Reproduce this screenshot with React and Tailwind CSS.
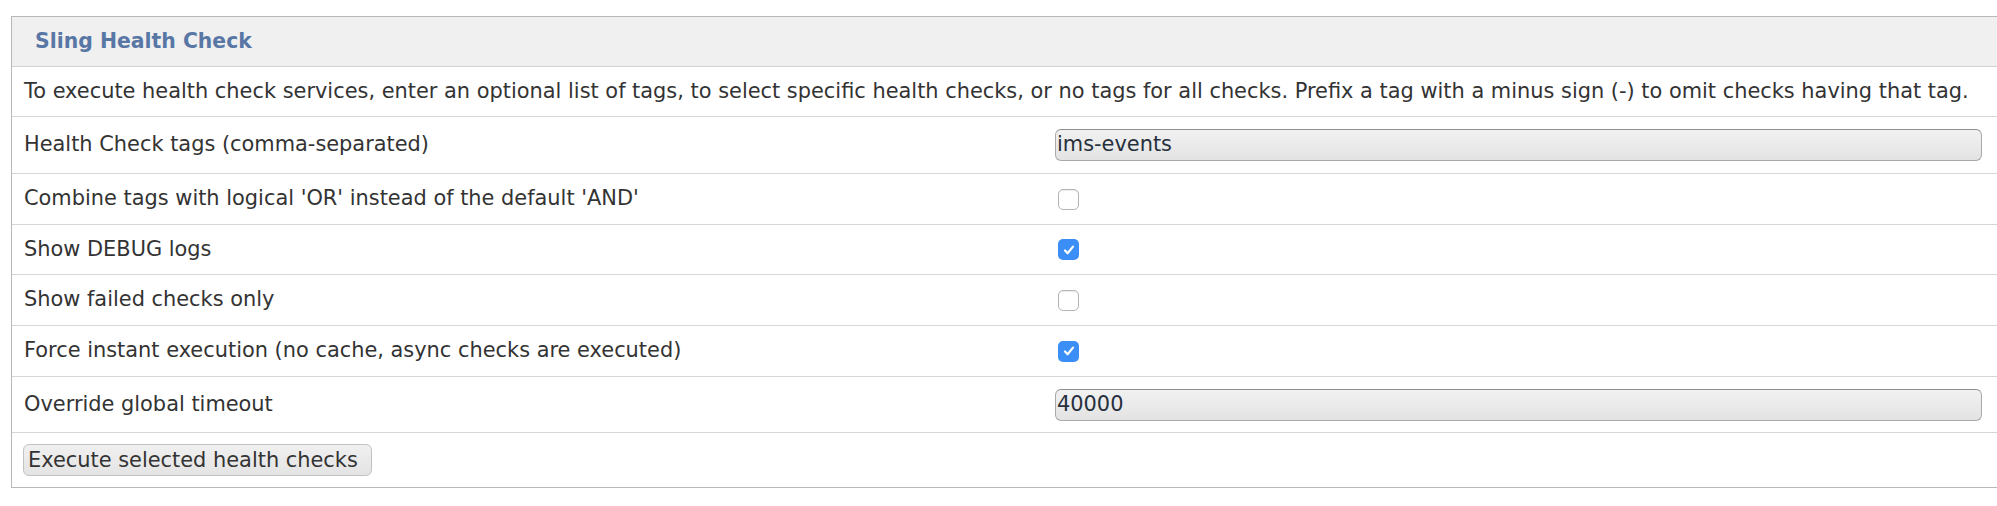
import React from 'react';

const rows = [
  { label: 'Health Check tags (comma-separated)', type: 'text', value: 'ims-events', h: 'h-[57px]' },
  { label: "Combine tags with logical 'OR' instead of the default 'AND'", type: 'check', checked: false, h: 'h-[51px]' },
  { label: 'Show DEBUG logs', type: 'check', checked: true, h: 'h-[50px]' },
  { label: 'Show failed checks only', type: 'check', checked: false, h: 'h-[51px]' },
  { label: 'Force instant execution (no cache, async checks are executed)', type: 'check', checked: true, h: 'h-[51px]' },
  { label: 'Override global timeout', type: 'text', value: '40000', h: 'h-[56px]' },
];

function Checkbox({ checked }) {
  if (checked) {
    return (
      <div className="ml-[3px] w-[21px] h-[21px] rounded-[5px] bg-[#3a8ef6] flex items-center justify-center">
        <svg width="14" height="14" viewBox="0 0 14 14" fill="none">
          <path d="M3 7.5l2.6 2.8L11 3.6" stroke="#fff" strokeWidth="2.2" strokeLinecap="round" strokeLinejoin="round" />
        </svg>
      </div>
    );
  }
  return <div className="ml-[3px] w-[21px] h-[21px] rounded-[5px] bg-white border-[1.5px] border-[#b4b4b4] shadow-[inset_0_1px_1px_rgba(0,0,0,0.08)]" />;
}

function TextField({ value }) {
  return (
    <div className="w-[927px] h-[32px] rounded-[6px] border border-[#a9a9a9] border-t-[#8e8e8e] bg-gradient-to-b from-[#f1f1f1] to-[#e3e3e3] flex items-center pl-px text-[#26303c]">
      {value}
    </div>
  );
}

export default function App() {
  return (
    <div className="w-full h-[506px] overflow-hidden bg-white pt-4 pl-[11px] text-[20.9px] text-[#333] font-['DejaVu_Sans',Verdana,sans-serif]">
      <div className="w-[2000px] border border-[#b8b8b8]">
        <div className="h-[50px] bg-[#f0f0f0] border-b border-[#d2d2d2] flex items-center pl-[23px] font-bold text-[#5877a5] text-[20.4px]">
          Sling Health Check
        </div>
        <div className="h-[50px] border-b border-[#d6d6d6] flex items-center pl-3">
          To execute health check services, enter an optional list of tags, to select specific health checks, or no tags for all checks. Prefix a tag with a minus sign (-) to omit checks having that tag.
        </div>
        {rows.map(row => (
          <div key={row.label} className={`${row.h} border-b border-[#d6d6d6] flex items-center`}>
            <div className="w-[1042px] pl-3">{row.label}</div>
            <div className="flex items-center pl-px">
              {row.type === 'text' ? <TextField value={row.value} /> : <Checkbox checked={row.checked} />}
            </div>
          </div>
        ))}
        <div className="h-[54px] flex items-center pl-[11px]">
          <button className="w-[349px] h-[32px] px-1 text-left rounded-[6px] border border-[#c2c2c2] bg-gradient-to-b from-[#f0f0f0] to-[#e4e4e4] text-[#333] leading-none whitespace-nowrap">
            Execute selected health checks
          </button>
        </div>
      </div>
    </div>
  );
}
